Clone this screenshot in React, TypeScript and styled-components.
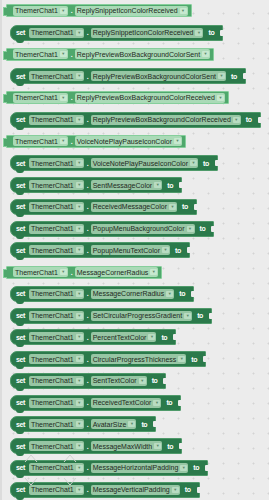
import React from 'react';
import styled, { createGlobalStyle } from 'styled-components';

const Global = createGlobalStyle`
  html, body {
    margin: 0;
    padding: 0;
    width: 269px;
    height: 500px;
    overflow: hidden;
  }
  body {
    font-family: 'Liberation Sans', Arial, sans-serif;
  }
`;

const Workspace = styled.div`
  position: relative;
  width: 269px;
  height: 500px;
  box-sizing: border-box;
  background-color: #ececec;
  background-image: radial-gradient(circle, #d4d4d4 0.8px, transparent 1.2px);
  background-size: 15px 15px;
  background-position: 4px 6px;
  border-left: 2px solid #dcdcdc;
  display: grid;
  grid-auto-rows: 21.77px;
  align-items: center;
  justify-items: start;
  font-size: 7px;
  line-height: 1;
  overflow: hidden;
`;

const Getter = styled.div`
  position: relative;
  margin-left: 4px;
  display: inline-flex;
  align-items: center;
  height: 13px;
  box-sizing: border-box;
  padding: 0 3px 0 6px;
  background: #4fa86c;
  border: 1px solid #86cf9c;
  border-radius: 1px;

  &::before {
    content: '';
    position: absolute;
    left: -4px;
    top: 2px;
    width: 3px;
    height: 7px;
    background: #4fa86c;
    border: 1px solid #86cf9c;
    border-right: none;
  }
`;

const Setter = styled.div`
  position: relative;
  margin-left: 8px;
  display: inline-flex;
  align-items: center;
  height: 16px;
  box-sizing: border-box;
  padding: 0 8px 0 5px;
  background: #2b7a4b;
  border: 1px solid #4f9a6a;
  border-radius: 7px 1px 1px 7px;

  &::before {
    content: '';
    position: absolute;
    left: 5px;
    bottom: -3px;
    width: 8px;
    height: 3px;
    background: #2b7a4b;
    border-radius: 0 0 3px 3px;
  }

  &::after {
    content: '';
    position: absolute;
    right: -1px;
    top: 4px;
    width: 3px;
    height: 6px;
    background: #ececec;
    border-radius: 1px 0 0 1px;
  }
`;

const Word = styled.span<{ $left?: number; $right?: number }>`
  color: #ffffff;
  font-weight: bold;
  letter-spacing: -0.4px;
  margin-left: ${p => p.$left ?? 0}px;
  margin-right: ${p => p.$right ?? 0}px;
  white-space: nowrap;
`;

const Dot = styled.span`
  color: #ffffff;
  font-weight: bold;
  margin: 0 2px 0 3px;
`;

const Field = styled.span<{ $setter?: boolean }>`
  display: inline-flex;
  align-items: center;
  gap: 2px;
  height: 10px;
  box-sizing: border-box;
  padding: 0 1px 0 2px;
  background: ${p => (p.$setter ? '#97c6a4' : '#aadab7')};
  border-radius: 2px;
  color: #1e2a22;
  white-space: nowrap;
`;

const Arrow = styled.span<{ $setter?: boolean }>`
  display: inline-flex;
  align-items: center;
  justify-content: center;
  width: 7px;
  height: 6px;
  border-radius: 1px;
  background: ${p => (p.$setter ? '#b8dcc2' : '#c6e8cf')};
  color: #5d8a6b;
  font-size: 4px;
`;

const Chevrons = styled.svg`
  position: absolute;
  left: 20px;
  top: 452px;
  pointer-events: none;
`;

type Row = { kind: 'get' | 'set'; prop: string };

const rows: Row[] = [
  { kind: 'get', prop: 'ReplySnippetIconColorReceived' },
  { kind: 'set', prop: 'ReplySnippetIconColorReceived' },
  { kind: 'get', prop: 'ReplyPreviewBoxBackgroundColorSent' },
  { kind: 'set', prop: 'ReplyPreviewBoxBackgroundColorSent' },
  { kind: 'get', prop: 'ReplyPreviewBoxBackgroundColorReceived' },
  { kind: 'set', prop: 'ReplyPreviewBoxBackgroundColorReceived' },
  { kind: 'get', prop: 'VoiceNotePlayPauseIconColor' },
  { kind: 'set', prop: 'VoiceNotePlayPauseIconColor' },
  { kind: 'set', prop: 'SentMessageColor' },
  { kind: 'set', prop: 'ReceivedMessageColor' },
  { kind: 'set', prop: 'PopupMenuBackgroundColor' },
  { kind: 'set', prop: 'PopupMenuTextColor' },
  { kind: 'get', prop: 'MessageCornerRadius' },
  { kind: 'set', prop: 'MessageCornerRadius' },
  { kind: 'set', prop: 'SetCircularProgressGradient' },
  { kind: 'set', prop: 'PercentTextColor' },
  { kind: 'set', prop: 'CircularProgressThickness' },
  { kind: 'set', prop: 'SentTextColor' },
  { kind: 'set', prop: 'ReceivedTextColor' },
  { kind: 'set', prop: 'AvatarSize' },
  { kind: 'set', prop: 'MessageMaxWidth' },
  { kind: 'set', prop: 'MessageHorizontalPadding' },
  { kind: 'set', prop: 'MessageVerticalPadding' },
];

const Dropdown = ({ label, setter }: { label: string; setter?: boolean }) => (
  <Field $setter={setter}>
    {label}
    <Arrow $setter={setter}>▼</Arrow>
  </Field>
);

const App = () => (
  <Workspace>
    <Global />
    {rows.map((row, i) =>
      row.kind === 'get' ? (
        <Getter key={i}>
          <Dropdown label="ThemerChat1" />
          <Dot>.</Dot>
          <Dropdown label={row.prop} />
        </Getter>
      ) : (
        <Setter key={i}>
          <Word $right={4}>set</Word>
          <Dropdown label="ThemerChat1" setter />
          <Dot>.</Dot>
          <Dropdown label={row.prop} setter />
          <Word $left={5}>to</Word>
        </Setter>
      )
    )}
    {/* faint scroll chevrons drawn over the workspace */}
    <Chevrons width="60" height="36" viewBox="0 0 60 36" fill="none" stroke="#d2d2d2" strokeWidth="1">
      <path d="M3 10 L9 3 L15 10" />
      <path d="M42 10 L48 3 L54 10" />
      <path d="M3 26 L9 33 L15 26" />
      <path d="M42 26 L48 33 L54 26" />
    </Chevrons>
  </Workspace>
);

export default App;
